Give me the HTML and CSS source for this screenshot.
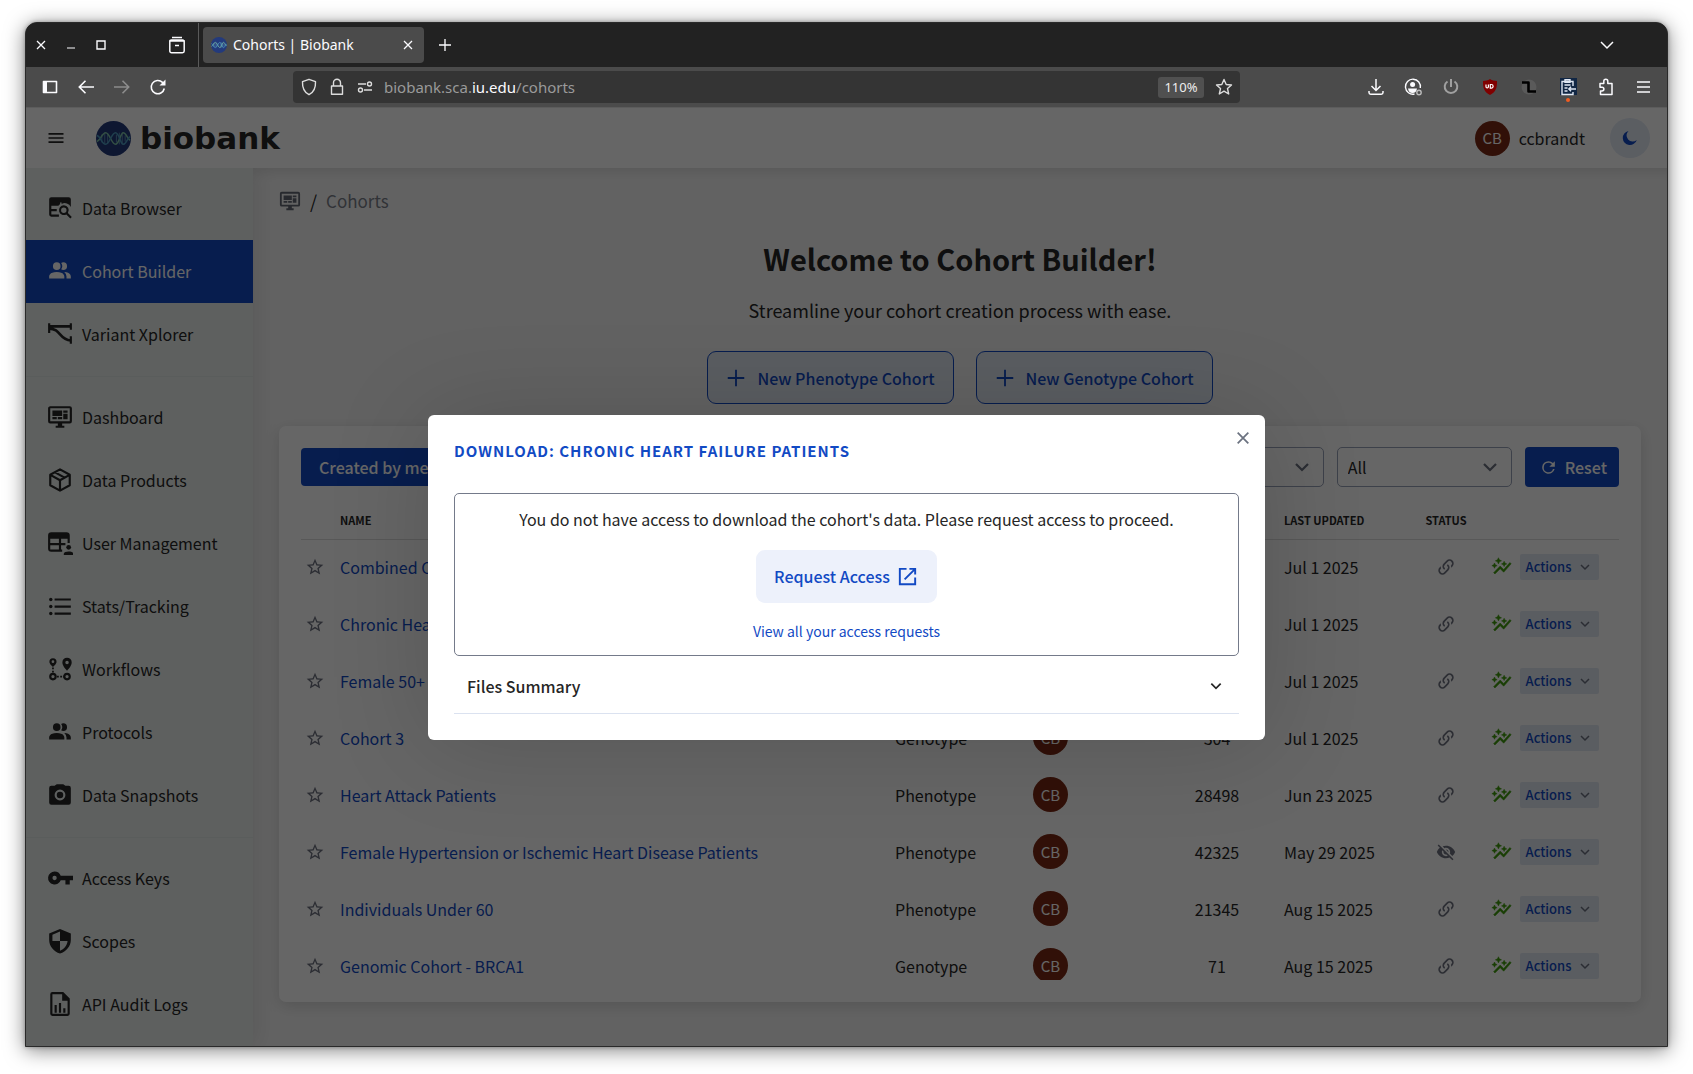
FILE: index.html
```html
<!DOCTYPE html>
<html lang="en">
<head>
<meta charset="utf-8">
<title>Cohorts | Biobank</title>
<link rel="stylesheet" href="styles.css">
</head>
<body>
<svg class="sprite" aria-hidden="true">
  <symbol id="i-logo" viewBox="0 0 36 36"><circle cx="18" cy="18" r="18" fill="#233a7c"/><g fill="none" stroke-width="1"><path d="M6 14v8M9 12v12M12 13v10M21 14v8M24 12v12M27 12v12M30 15v6" stroke="#5f8fb5"/><path d="M1 21c4-1 5-9 9-9s6 12 10 12 5-12 8-12 4 6 7 8" stroke="#7fc4a8" stroke-width="1.6"/><path d="M1 15c4 1 5 9 9 9s6-12 10-12 5 12 8 12 4-6 7-8" stroke="#4f9dc0" stroke-width="1.6"/></g></symbol>
  <symbol id="i-menu" viewBox="0 0 24 24"><path d="M3 6h18v2H3zm0 5h18v2H3zm0 5h18v2H3z"/></symbol>
  <symbol id="i-browse" viewBox="0 0 24 24"><path d="M20 2H4a2 2 0 0 0-2 2v14a2 2 0 0 0 2 2h7v-2H4v-3h5v-2H4v-3h6.500a6 6 0 0 1 2-2H12V7h1.500v1.300A6 6 0 0 1 22 11V4a2 2 0 0 0-2-2z"/><path d="M15.500 9.500a4.500 4.500 0 1 0 2.300 8.400l3.700 3.700 1.400-1.400-3.600-3.700a4.500 4.500 0 0 0-3.800-7zm0 2a2.500 2.500 0 1 1 0 5 2.500 2.500 0 0 1 0-5z"/></symbol>
  <symbol id="i-people" viewBox="0 0 24 24"><path d="M16 17v2H2v-2s0-4 7-4 7 4 7 4m-3.500-9.500A3.500 3.500 0 1 0 9 11a3.500 3.500 0 0 0 3.500-3.500m3.440 5.500A5.320 5.320 0 0 1 18 17v2h4v-2s0-3.630-6.060-4M15 4a3.390 3.390 0 0 0-1.930.590 5 5 0 0 1 0 5.820A3.390 3.390 0 0 0 15 11a3.500 3.500 0 0 0 0-7z"/></symbol>
  <symbol id="i-variant" viewBox="0 0 24 24"><path d="M2 2v9M22 2v6M22 14v7" fill="none" stroke="currentColor" stroke-width="2"/><path d="M2 5h20M2 7c11 0 9 10.500 20 11" fill="none" stroke="currentColor" stroke-width="2.400"/></symbol>
  <symbol id="i-monitor" viewBox="0 0 24 24"><path d="M21 16V4H3v12h18m0-14a2 2 0 0 1 2 2v12a2 2 0 0 1-2 2h-7v2h2v2H8v-2h2v-2H3a2 2 0 0 1-2-2V4c0-1.110.890-2 2-2h18M5 6h9v5H5V6m10 0h4v2h-4V6m4 3v5h-4V9h4M5 12h4v2H5v-2m5 0h4v2h-4v-2z"/></symbol>
  <symbol id="i-box" viewBox="0 0 24 24"><path d="M12 2.200l9 5v9.600l-9 5-9-5V7.200zM3.500 7.500L12 12.200l8.500-4.700M12 12v9.500M7.500 5l8.700 4.800" fill="none" stroke="currentColor" stroke-width="2" stroke-linejoin="round"/></symbol>
  <symbol id="i-users-table" viewBox="0 0 24 24"><path d="M4 2h14a3 3 0 0 1 3 3v7h-2V8h-6v4h4v2h-4v4h1v2H4a3 3 0 0 1-3-3V5a3 3 0 0 1 3-3zM3 8v4h8V8zm0 6v4h8v-4z" fill-rule="evenodd"/><circle cx="20" cy="16" r="2.200"/><path d="M15.500 23v-1c0-3 9-3 9 0v1z"/></symbol>
  <symbol id="i-list" viewBox="0 0 24 24"><path d="M7 5h15v2H7zm0 6.500h15v2H7zM7 18h15v2H7z"/><circle cx="3.500" cy="6" r="1.600"/><circle cx="3.500" cy="12.500" r="1.600"/><circle cx="3.500" cy="19" r="1.600"/></symbol>
  <symbol id="i-flow" viewBox="0 0 24 24"><path d="M5.500 2a3.300 3.300 0 0 0-3.300 3.300C2.200 7.500 5.500 10 5.500 10s3.300-2.500 3.300-4.700A3.300 3.300 0 0 0 5.500 2zm0 2a1.200 1.200 0 1 1 0 2.500 1.200 1.200 0 0 1 0-2.500zM18.500 1.500A4.300 4.300 0 0 0 14.200 6c0 3.300 4.300 7.500 4.300 7.500S22.800 9.300 22.800 6a4.300 4.300 0 0 0-4.300-4.500zm0 2.800a1.600 1.600 0 1 1 0 3.200 1.600 1.600 0 0 1 0-3.200z" fill-rule="evenodd"/><path d="M4.700 10.500h1.600v1.700H4.700zm0 3h1.600v1.700H4.700zM9.200 18.200h1.700v1.600H9.200zm3 0h1.700v1.600h-1.700z"/><g fill="none" stroke="currentColor" stroke-width="2"><circle cx="5.500" cy="19" r="2.500"/><circle cx="18.500" cy="19" r="2.500"/><path d="M15 19h1"/></g></symbol>
  <symbol id="i-camera" viewBox="0 0 24 24"><path fill-rule="evenodd" d="M4 3.500h3L9 2h6l2 1.500h3a2 2 0 0 1 2 2V19a2 2 0 0 1-2 2H4a2 2 0 0 1-2-2V5.500a2 2 0 0 1 2-2M12 7a5 5 0 1 0 0 10 5 5 0 0 0 0-10m0 2a3 3 0 1 1 0 6 3 3 0 0 1 0-6"/></symbol>
  <symbol id="i-key" viewBox="0 0 24 24"><path fill-rule="evenodd" d="M7 14a2 2 0 1 1 0-4 2 2 0 0 1 0 4m5.650-4A6 6 0 0 0 7 6a6 6 0 1 0 5.650 8H17v4h4v-4h3v-4z"/></symbol>
  <symbol id="i-shield" viewBox="0 0 24 24"><path fill-rule="evenodd" d="M12 12h7c-.530 4.110-3.280 7.780-7 8.920V12H5V6.300l7-3.110M12 1 2 5v6c0 5.550 4.200 10.730 10 12.500 5.800-1.770 10-6.950 10-12.500V5z"/></symbol>
  <symbol id="i-chart-file" viewBox="0 0 24 24"><path fill-rule="evenodd" d="M5 1h10l6 6v14a2 2 0 0 1-2 2H5a2 2 0 0 1-2-2V3a2 2 0 0 1 2-2zm0 2v18h14V9h-5V3z"/><path d="M7 13h2v7H7zm4-2h2v9h-2zm4 5h2v4h-2z"/></symbol>
  <symbol id="i-star" viewBox="0 0 24 24"><path d="M12 15.390l-3.760 2.270.990-4.280-3.320-2.880 4.380-.370L12 6.090l1.710 4.040 4.380.370-3.320 2.880.990 4.280M22 9.240l-7.190-.610L12 2 9.190 8.630 2 9.240l5.450 4.730L5.820 21 12 17.270 18.180 21l-1.640-7.030L22 9.240z"/></symbol>
  <symbol id="i-link" viewBox="0 0 24 24"><path d="M10.590 13.410c.410.390.410 1.030 0 1.420-.390.390-1.030.390-1.420 0a5.003 5.003 0 0 1 0-7.070l3.540-3.540a5.003 5.003 0 0 1 7.070 0 5.003 5.003 0 0 1 0 7.070l-1.490 1.490c.010-.820-.120-1.640-.400-2.420l.470-.480a2.982 2.982 0 0 0 0-4.240 2.982 2.982 0 0 0-4.240 0l-3.530 3.530a2.982 2.982 0 0 0 0 4.240m2.820-4.240c.390-.390 1.030-.390 1.420 0a5.003 5.003 0 0 1 0 7.070l-3.540 3.540a5.003 5.003 0 0 1-7.070 0 5.003 5.003 0 0 1 0-7.070l1.490-1.490c-.010.820.120 1.640.400 2.430l-.470.470a2.982 2.982 0 0 0 0 4.240 2.982 2.982 0 0 0 4.240 0l3.530-3.530a2.982 2.982 0 0 0 0-4.240.973.973 0 0 1 0-1.420z"/></symbol>
  <symbol id="i-hidden" viewBox="0 0 24 24"><path d="M12 7c2.760 0 5 2.240 5 5 0 .650-.130 1.260-.360 1.830l2.920 2.920c1.510-1.260 2.700-2.890 3.430-4.750-1.730-4.390-6-7.500-11-7.500-1.400 0-2.740.250-3.980.700l2.160 2.160C10.740 7.130 11.350 7 12 7zM2 4.270l2.280 2.280.460.460C3.080 8.300 1.780 10.020 1 12c1.730 4.390 6 7.500 11 7.500 1.550 0 3.030-.300 4.380-.840l.420.420L19.730 22 21 20.730 3.270 3 2 4.270zM7.530 9.800l1.550 1.550c-.050.210-.080.430-.080.650 0 1.660 1.340 3 3 3 .220 0 .440-.030.650-.080l1.550 1.550c-.670.330-1.410.530-2.200.530-2.760 0-5-2.240-5-5 0-.790.200-1.530.530-2.200zm4.310-.780l3.150 3.150.020-.160c0-1.660-1.340-3-3-3l-.170.010z"/></symbol>
  <symbol id="i-graph" viewBox="0 0 24 24"><path d="M14.060 9.940L12 9l2.060-.940L15 6l.940 2.060L18 9l-2.060.940L15 12zM4 14l.940-2.060L7 11l-2.060-.940L4 8l-.940 2.060L1 11l2.060.940zm4.500-5l1.090-2.410L12 5.500 9.590 4.410 8.500 2 7.410 4.410 5 5.500l2.410 1.090zm-4 11.500l6-6.010 4 4L23 8.930l-1.410-1.410-7.090 7.970-4-4L3 19z" stroke="currentColor" stroke-width=".6"/></symbol>
  <symbol id="i-down" viewBox="0 0 24 24"><path d="M4 8l8 8 8-8" fill="none" stroke="currentColor" stroke-width="3"/></symbol>
  <symbol id="i-refresh" viewBox="0 0 24 24"><path d="M17.650 6.350A7.958 7.958 0 0 0 12 4a8 8 0 1 0 7.730 10h-2.080A6 6 0 1 1 12 6c1.660 0 3.140.690 4.220 1.780L13 11h7V4z"/></symbol>
  <symbol id="i-plus" viewBox="0 0 24 24"><path d="M12 3v18M3 12h18" fill="none" stroke="currentColor" stroke-width="2"/></symbol>
  <symbol id="i-x" viewBox="0 0 24 24"><path d="M4 4l16 16M20 4L4 20" fill="none" stroke="currentColor" stroke-width="2.600"/></symbol>
  <symbol id="i-external" viewBox="0 0 24 24"><path d="M11 4H4v16h16v-7M14 4h6v6M20 4L9 15" fill="none" stroke="currentColor" stroke-width="2"/></symbol>
  <symbol id="i-moon" viewBox="0 0 24 24"><path d="M21 14.500A9.500 9.500 0 1 1 10 2.500a8 8 0 0 0 11 12z"/></symbol>
</svg>

<div class="window">
  <div class="tabs">
    <div class="win-controls">
      <button aria-label="Close window"><svg class="s12"><use href="#i-x"/></svg></button>
      <button aria-label="Minimize"><svg class="s12" viewBox="0 0 12 12"><path d="M2 9h8" fill="none" stroke="currentColor"/></svg></button>
      <button aria-label="Maximize"><svg class="s12" viewBox="0 0 12 12"><path d="M2 2h8v8H2z" fill="none" stroke="currentColor" stroke-width="1.400"/></svg></button>
    </div>
    <button class="view-btn" aria-label="View recent tabs"><svg class="s18" viewBox="0 0 18 18"><path d="M4 1.500h10M1.800 5h14.400v10a1.700 1.700 0 0 1-1.700 1.700h-11A1.700 1.700 0 0 1 1.800 15zM1.800 7.500V5.500A1.500 1.500 0 0 1 3.300 4h11.400a1.500 1.500 0 0 1 1.500 1.500M7 9.500h4" fill="none" stroke="currentColor" stroke-width="1.500"/></svg></button>
    <div class="tab">
      <svg class="s16"><use href="#i-logo"/></svg>
      <span class="tab-title">Cohorts | Biobank</span>
      <button aria-label="Close tab"><svg class="s12"><use href="#i-x"/></svg></button>
    </div>
    <button class="new-tab" aria-label="New tab"><svg class="s16"><use href="#i-plus"/></svg></button>
    <button class="list-tabs" aria-label="List all tabs"><svg class="s16" viewBox="0 0 16 16"><path d="M2 5l6 6 6-6" fill="none" stroke="currentColor" stroke-width="1.500"/></svg></button>
  </div>

  <div class="toolbar">
    <div class="nav-buttons">
      <button aria-label="Sidebar"><svg class="s18" viewBox="0 0 18 18"><path d="M2.500 3.500h13v11h-13z" fill="none" stroke="currentColor" stroke-width="1.600" stroke-linejoin="round"/><path d="M2 3h4v12H2z"/></svg></button>
      <button aria-label="Back"><svg class="s18" viewBox="0 0 18 18"><path d="M17 9H2.500M8.500 2.800L2.300 9l6.200 6.200" fill="none" stroke="currentColor" stroke-width="1.600"/></svg></button>
      <button aria-label="Forward" disabled><svg class="s18" viewBox="0 0 18 18"><path d="M1 9h14.500M9.500 2.800L15.700 9l-6.200 6.200" fill="none" stroke="currentColor" stroke-width="1.600"/></svg></button>
      <button aria-label="Reload"><svg class="s18" viewBox="0 0 18 18"><path d="M15.300 10.500A6.600 6.600 0 1 1 13.500 4.400L15 6" fill="none" stroke="currentColor" stroke-width="1.600"/><path d="M16.500 1.500v6h-6z"/></svg></button>
    </div>
    <div class="urlbar">
      <svg class="s18" viewBox="0 0 18 18"><path d="M9 1.300l6.500 2.400c.3 6.500-1.600 10.500-6.500 13-4.900-2.500-6.800-6.500-6.500-13z" fill="none" stroke="currentColor" stroke-width="1.400" stroke-linejoin="round"/></svg>
      <svg class="s18" viewBox="0 0 18 18"><path d="M3.500 8h11v8.300h-11zM5.500 8V4.800a3.500 3.500 0 0 1 7 0V8" fill="none" stroke="currentColor" stroke-width="1.400" stroke-linejoin="round"/></svg>
      <svg class="s18" viewBox="0 0 18 18"><path d="M2 6h8M8 12h8" stroke="currentColor" stroke-width="1.500"/><g fill="none" stroke="currentColor" stroke-width="1.400"><circle cx="13.500" cy="6" r="2"/><circle cx="4.500" cy="12" r="2"/></g></svg>
      <span class="url">biobank.sca.<b>iu.edu</b>/cohorts</span>
      <button class="zoom-level">110%</button>
      <button aria-label="Bookmark"><svg class="s18" viewBox="0 0 18 18"><path d="M9 1.500l2.200 5 5.300.5-4 3.600 1.200 5.400L9 13.200 4.300 16l1.200-5.400-4-3.600 5.300-.5z" fill="none" stroke="currentColor" stroke-width="1.400" stroke-linejoin="round"/></svg></button>
    </div>
    <div class="tools">
      <button aria-label="Downloads"><svg class="s18" viewBox="0 0 18 18"><path d="M9 1v11M4.500 8L9 12.500 13.500 8M2 13v1.500A1.700 1.700 0 0 0 3.700 16.200h10.600A1.700 1.700 0 0 0 16 14.500V13" fill="none" stroke="currentColor" stroke-width="1.500"/></svg></button>
      <button aria-label="Account"><svg class="s18" viewBox="0 0 18 18"><path d="M10.500 16A7.500 7.500 0 1 1 16.300 10" fill="none" stroke="currentColor" stroke-width="1.400"/><circle cx="8.600" cy="6.500" r="2.500"/><path d="M4 10.500h9c-.5 3-2 4.500-4.500 4.500S4.500 13.500 4 10.500z"/><circle cx="15" cy="14.500" r="2.200" fill="none" stroke="#bbb" stroke-width="1.400"/></svg></button>
      <button class="ext dim" aria-label="Power"><svg class="s18" viewBox="0 0 18 18"><path d="M5.500 3.500a6.300 6.300 0 1 0 7 0M9 1v8" fill="none" stroke="currentColor" stroke-width="2"/></svg></button>
      <button class="ext" aria-label="uBlock"><svg class="s18" viewBox="0 0 18 18"><path d="M9 1c2 1.500 4.500 1.800 7 2 .2 6.500-1 11-7 14C3 14 1.800 9.500 2 3c2.500-.2 5-.5 7-2z" fill="#800000"/><path d="M5 6.500v2.200a1.200 1.200 0 0 0 2.400 0V6.500M9.300 6.500h1a1.800 1.800 0 0 1 0 3.600h-1z" fill="none" stroke="#fff" stroke-width="1.200"/></svg></button>
      <button class="ext" aria-label="Layout extension"><svg class="s18" viewBox="0 0 18 18"><circle cx="9" cy="9" r="7.500" fill="#5a5a5a"/><path d="M2 4.500h6.500v9H16" fill="none" stroke="#000" stroke-width="2.600" stroke-linejoin="round"/></svg></button>
      <button class="ext badge" aria-label="Clipboard extension"><svg class="s18" viewBox="0 0 18 18"><path d="M1 0h17v17H1z" fill="#122744"/><path d="M14 8V3.500H3v13h11V14M6 1.800h5v2.500H6zM5.500 7h6M5.500 10h3M5.500 13h3M17 11h-7M12 8.800L9.800 11l2.200 2.200" fill="none" stroke="#dfe7f2" stroke-width="1.400"/></svg></button>
      <button aria-label="Extensions"><svg class="s18" viewBox="0 0 18 18"><path d="M3 5.500h3.800V3.300a2 2 0 0 1 4 0v2.200H15v11H3.500V13H5a1.900 1.900 0 0 0 0-3.800H3z" fill="none" stroke="currentColor" stroke-width="1.500" stroke-linejoin="round"/></svg></button>
      <button aria-label="Menu"><svg class="s18" viewBox="0 0 18 18"><path d="M3 4h13M3 9h13M3 14h13" stroke="currentColor" stroke-width="1.500"/></svg></button>
    </div>
  </div>

  <div class="viewport">
    <header class="app-header">
      <button class="burger" aria-label="Toggle menu"><svg class="s20"><use href="#i-menu"/></svg></button>
      <a class="brand" href="#"><svg class="brand-mark"><use href="#i-logo"/></svg><span>biobank</span></a>
      <div class="user"><span class="avatar">CB</span><span>ccbrandt</span></div>
      <button class="theme" aria-label="Dark mode"><svg class="s18"><use href="#i-moon"/></svg></button>
    </header>

    <div class="app-body">
      <nav class="sidebar">
        <div class="group">
          <a href="#"><svg><use href="#i-browse"/></svg>Data Browser</a>
          <a href="#" class="active"><svg><use href="#i-people"/></svg>Cohort Builder</a>
          <a href="#"><svg><use href="#i-variant"/></svg>Variant Xplorer</a>
        </div>
        <div class="group">
          <a href="#"><svg><use href="#i-monitor"/></svg>Dashboard</a>
          <a href="#"><svg><use href="#i-box"/></svg>Data Products</a>
          <a href="#"><svg><use href="#i-users-table"/></svg>User Management</a>
          <a href="#"><svg><use href="#i-list"/></svg>Stats/Tracking</a>
          <a href="#"><svg><use href="#i-flow"/></svg>Workflows</a>
          <a href="#"><svg><use href="#i-people"/></svg>Protocols</a>
          <a href="#"><svg><use href="#i-camera"/></svg>Data Snapshots</a>
        </div>
        <div class="group">
          <a href="#"><svg><use href="#i-key"/></svg>Access Keys</a>
          <a href="#"><svg><use href="#i-shield"/></svg>Scopes</a>
          <a href="#"><svg><use href="#i-chart-file"/></svg>API Audit Logs</a>
        </div>
      </nav>

      <main>
        <div class="crumbs"><a href="#" aria-label="Dashboard"><svg><use href="#i-monitor"/></svg></a><span class="slash">/</span><span>Cohorts</span></div>
        <h1>Welcome to Cohort Builder!</h1>
        <p class="lead">Streamline your cohort creation process with ease.</p>
        <div class="cta">
          <button><svg><use href="#i-plus"/></svg>New Phenotype Cohort</button>
          <button><svg><use href="#i-plus"/></svg>New Genotype Cohort</button>
        </div>

        <section class="card">
          <div class="filters">
            <button class="primary">Created by me</button>
            <label class="pick push"><select aria-label="Type"><option>All</option></select><svg><use href="#i-down"/></svg></label>
            <label class="pick"><select aria-label="Status"><option>All</option></select><svg><use href="#i-down"/></svg></label>
            <button class="primary reset"><svg><use href="#i-refresh"/></svg>Reset</button>
          </div>
          <div class="table-wrap">
            <table>
              <colgroup><col class="c-star"><col><col class="c-type"><col class="c-owner"><col class="c-count"><col class="c-date"><col class="c-status"><col class="c-act"></colgroup>
              <thead><tr><th></th><th>Name</th><th>Type</th><th>Owner</th><th class="mid">Count</th><th>Last Updated</th><th class="mid">Status</th><th></th></tr></thead>
              <tbody>
                <tr><td class="star"><svg><use href="#i-star"/></svg></td><td><a href="#">Combined Cohort</a></td><td></td><td></td><td></td><td>Jul 1 2025</td><td class="mid status"><svg><use href="#i-link"/></svg></td><td><div class="acts"><svg><use href="#i-graph"/></svg><button>Actions<svg><use href="#i-down"/></svg></button></div></td></tr>
                <tr><td class="star"><svg><use href="#i-star"/></svg></td><td><a href="#">Chronic Heart Failure</a></td><td></td><td></td><td></td><td>Jul 1 2025</td><td class="mid status"><svg><use href="#i-link"/></svg></td><td><div class="acts"><svg><use href="#i-graph"/></svg><button>Actions<svg><use href="#i-down"/></svg></button></div></td></tr>
                <tr><td class="star"><svg><use href="#i-star"/></svg></td><td><a href="#">Female 50+</a></td><td></td><td></td><td></td><td>Jul 1 2025</td><td class="mid status"><svg><use href="#i-link"/></svg></td><td><div class="acts"><svg><use href="#i-graph"/></svg><button>Actions<svg><use href="#i-down"/></svg></button></div></td></tr>
                <tr><td class="star"><svg><use href="#i-star"/></svg></td><td><a href="#">Cohort 3</a></td><td>Genotype</td><td><span class="avatar">CB</span></td><td class="mid">304</td><td>Jul 1 2025</td><td class="mid status"><svg><use href="#i-link"/></svg></td><td><div class="acts"><svg><use href="#i-graph"/></svg><button>Actions<svg><use href="#i-down"/></svg></button></div></td></tr>
                <tr><td class="star"><svg><use href="#i-star"/></svg></td><td><a href="#">Heart Attack Patients</a></td><td>Phenotype</td><td><span class="avatar">CB</span></td><td class="mid">28498</td><td>Jun 23 2025</td><td class="mid status"><svg><use href="#i-link"/></svg></td><td><div class="acts"><svg><use href="#i-graph"/></svg><button>Actions<svg><use href="#i-down"/></svg></button></div></td></tr>
                <tr><td class="star"><svg><use href="#i-star"/></svg></td><td><a href="#">Female Hypertension or Ischemic Heart Disease Patients</a></td><td>Phenotype</td><td><span class="avatar">CB</span></td><td class="mid">42325</td><td>May 29 2025</td><td class="mid status"><svg><use href="#i-hidden"/></svg></td><td><div class="acts"><svg><use href="#i-graph"/></svg><button>Actions<svg><use href="#i-down"/></svg></button></div></td></tr>
                <tr><td class="star"><svg><use href="#i-star"/></svg></td><td><a href="#">Individuals Under 60</a></td><td>Phenotype</td><td><span class="avatar">CB</span></td><td class="mid">21345</td><td>Aug 15 2025</td><td class="mid status"><svg><use href="#i-link"/></svg></td><td><div class="acts"><svg><use href="#i-graph"/></svg><button>Actions<svg><use href="#i-down"/></svg></button></div></td></tr>
                <tr><td class="star"><svg><use href="#i-star"/></svg></td><td><a href="#">Genomic Cohort - BRCA1</a></td><td>Genotype</td><td><span class="avatar">CB</span></td><td class="mid">71</td><td>Aug 15 2025</td><td class="mid status"><svg><use href="#i-link"/></svg></td><td><div class="acts"><svg><use href="#i-graph"/></svg><button>Actions<svg><use href="#i-down"/></svg></button></div></td></tr>
              </tbody>
            </table>
          </div>
        </section>
      </main>
    </div>

    <div class="overlay">
      <div class="modal" role="dialog" aria-modal="true" aria-labelledby="dialog-title">
        <button class="modal-close" aria-label="Close"><svg><use href="#i-x"/></svg></button>
        <h2 id="dialog-title">Download: Chronic Heart Failure Patients</h2>
        <div class="notice">
          <p>You do not have access to download the cohort's data. Please request access to proceed.</p>
          <button class="request">Request Access<svg><use href="#i-external"/></svg></button>
          <a href="#">View all your access requests</a>
        </div>
        <button class="accordion"><span>Files Summary</span><svg><use href="#i-down"/></svg></button>
      </div>
    </div>
  </div>
</div>
</body>
</html>
```
FILE: styles.css
```css
* { box-sizing: border-box; }
html { background: #fff; }
body {
  margin: 0;
  padding: 22px 25px 28px;
  min-height: 100vh;
  display: flex;
  font: 16px/24px "Noto Sans CJK SC", "Open Sans", sans-serif;
  color: #262626;
}
button, select { font: inherit; color: inherit; }
button { border: 0; background: none; padding: 0; display: flex; align-items: center; justify-content: center; }
a { text-decoration: none; color: #124ac4; }
svg { fill: currentColor; display: block; flex: none; }
.sprite { position: absolute; width: 0; height: 0; }
.s12 { width: 12px; height: 12px; }
.s16 { width: 16px; height: 16px; }
.s18 { width: 18px; height: 18px; }
.s20 { width: 20px; height: 20px; }

/* browser frame */
.window {
  flex: 1;
  min-width: 0;
  display: flex;
  flex-direction: column;
  border: 1px solid #2a2a2a;
  border-radius: 12px 12px 0 0;
  overflow: hidden;
  background: #222;
  box-shadow: 0 3px 20px rgba(0, 0, 0, .5), 0 0 4px rgba(0, 0, 0, .3);
}
.tabs { height: 44px; display: flex; align-items: center; color: #fbfbfe; background: #222; font: 14px/20px "Noto Sans", sans-serif; }
.win-controls { display: flex; }
.win-controls button { width: 30px; height: 30px; }
.view-btn { width: 44px; height: 44px; margin-left: 39px; border-right: 1px solid #5a5a5a; }
.tab { margin-left: 4px; width: 221px; height: 36px; padding: 0 10px 0 8px; display: flex; align-items: center; gap: 6px; border-radius: 4px; background: #4b4b4b; }
.tab-title { flex: 1; white-space: nowrap; }
.new-tab { width: 42px; height: 36px; }
.list-tabs { width: 36px; height: 36px; margin-left: auto; margin-right: 42px; }

.toolbar { height: 41px; display: flex; align-items: center; justify-content: space-between; background: #4b4b4b; border-bottom: 1px solid #5c5c5c; color: #fbfbfe; font: 15px/20px "Noto Sans", sans-serif; }
.nav-buttons { display: flex; padding-left: 6px; }
.nav-buttons button { width: 36px; height: 36px; }
.nav-buttons button:disabled { color: #8c8c8c; }
.urlbar { flex: 1; margin-left: 117px; margin-right: 117px; height: 32px; padding: 0 7px; display: flex; align-items: center; gap: 10px; border-radius: 4px; background: #343434; color: #dcdcdc; }
.url { flex: 1; color: #9a9a9a; }
.url b { font-weight: 400; color: #fbfbfe; }
.zoom-level { width: 46px; height: 21px; margin-right: 1px; border-radius: 3px; background: #505050; color: #eee; font-size: 13px; }
.tools { display: flex; padding-right: 6px; }
.tools button { width: 37px; height: 36px; }
.tools .ext { width: 39px; position: relative; }
.tools .dim { color: #a0a0a0; }
.badge::after { content: ""; position: absolute; left: 18px; bottom: 3px; width: 4px; height: 4px; border-radius: 50%; background: #f25c20; }

/* application */
.viewport { flex: 1; position: relative; display: flex; flex-direction: column; background: #f6f6f6; }
.app-header { position: relative; height: 60px; padding: 0 17px 0 20px; display: flex; align-items: center; background: #fff; }
.burger { width: 20px; height: 20px; }
.brand { display: flex; align-items: center; gap: 9px; margin-left: 30px; color: #262626; font: 700 31px/40px "DejaVu Sans", sans-serif; }
.brand-mark { width: 35px; height: 35px; }
.user { margin-left: auto; display: flex; align-items: center; gap: 9px; }
.avatar { width: 35px; height: 35px; border-radius: 50%; display: grid; place-items: center; background: #7c2a14; color: #fff; font-size: 15px; }
.theme { width: 40px; height: 40px; margin-left: 25px; border-radius: 50%; background: #e3eaf6; color: #124ac4; }

.app-body { flex: 1; display: flex; }
.sidebar { flex: none; width: 227px; background: #ebf0ee; box-shadow: 6px 0 20px rgba(0, 0, 0, .08); }
.group { padding: 9px 0 10px; }
.group + .group { border-top: 1px solid #e2e8e6; }
.group a { height: 63px; padding: 0 0 1px 21px; display: flex; align-items: center; gap: 9px; color: #262626; }
.group svg { width: 26px; height: 26px; overflow: visible; }
.group .active { background: #124ac4; color: #fff; }

main { flex: 1; min-width: 0; padding: 20px 26px 40px; box-shadow: inset 0 12px 12px -8px rgba(0, 0, 0, .1); }
.crumbs { display: flex; align-items: center; gap: 9px; height: 26px; color: #7b7f8a; font-size: 17px; }
.crumbs svg { width: 22px; height: 22px; color: #626873; }
.slash { color: #262626; font-size: 18px; }
h1 { margin: 24px 0 0; font-size: 29px; line-height: 40px; font-weight: 700; text-align: center; }
.lead { margin: 18px 0 0; font-size: 18px; line-height: 28px; text-align: center; }
.cta { margin-top: 27px; display: flex; justify-content: center; gap: 22px; }
.cta button { height: 53px; padding: 0 18px 0 17px; gap: 10px; border: 1px solid #124ac4; border-radius: 9px; background: #e1e8f3; color: #124ac4; font-weight: 500; }
.cta svg { width: 22px; height: 22px; }

.card { margin-top: 22px; padding: 21px 22px 22px; border-radius: 7px; background: #fff; box-shadow: 0 4px 16px rgba(0, 0, 0, .14); }
.filters { display: flex; align-items: center; gap: 13px; }
.primary { height: 38px; padding: 0 18px; border-radius: 4px; background: #124ac4; color: #fff; font-weight: 500; }
.reset { height: 40px; padding: 0 12px 0 14px; gap: 7px; }
.reset svg { width: 19px; height: 19px; }
.push { margin-left: auto; }
.pick { display: grid; align-items: center; }
.pick > * { grid-area: 1 / 1; }
.pick select { appearance: none; width: 175px; height: 40px; padding: 0 10px; border: 1px solid #9aa3b8; border-radius: 5px; background: #fff; }
.pick svg { width: 18px; height: 18px; justify-self: end; margin-right: 13px; color: #6b7280; }
.table-wrap { height: 493px; overflow: hidden; }
table { width: 100%; border-collapse: collapse; table-layout: fixed; }
.c-star { width: 39px; }
.c-type { width: 138px; }
.c-owner { width: 117px; }
.c-count { width: 134px; }
.c-date { width: 121px; }
.c-status { width: 82px; }
.c-act { width: 132px; }
th { height: 52px; padding: 14px 0 0; border-bottom: 1px solid #dcdcdc; text-align: left; text-transform: uppercase; white-space: nowrap; font-size: 11px; line-height: 16px; }
td { height: 57px; padding: 0 0 2px; white-space: nowrap; }
.mid { text-align: center; }
.star svg { width: 20px; height: 20px; margin-left: 4px; color: #6e7280; }
.status svg { width: 20px; height: 20px; margin: 0 auto; color: #6e7280; }
.acts { display: flex; align-items: center; gap: 8px; padding-left: 4px; }
.acts > svg { width: 21px; height: 21px; color: #3f9c0c; }
.acts button { width: 79px; height: 26px; padding-right: 2px; gap: 8px; border-radius: 2px; background: #e1e8f3; color: #124ac4; font-size: 13px; font-weight: 500; }
.acts button svg { width: 12px; height: 12px; color: #6b7280; }

/* dialog */
.overlay { position: absolute; inset: 0; display: grid; place-items: center; background: rgba(0, 0, 0, .6); }
.modal { position: relative; width: 837px; max-width: 90%; padding: 24px 26px 26px; border-radius: 6px; background: #fff; box-shadow: 0 4px 100px rgba(0, 0, 0, .16); }
.modal-close { position: absolute; top: 14px; right: 13px; width: 18px; height: 18px; color: #6b7280; }
.modal-close svg { width: 16px; height: 16px; }
h2 { margin: 0; font-size: 15px; line-height: 24px; font-weight: 700; letter-spacing: 1px; text-transform: uppercase; color: #124ac4; }
.notice { margin-top: 30px; height: 163px; padding: 13px; display: flex; flex-direction: column; align-items: center; border: 1px solid #747a8a; border-radius: 5px; }
.notice p { margin: 0; }
.notice a { margin-top: 16px; font-size: 14px; }
.request { flex: none; margin-top: 19px; height: 53px; padding: 0 18px; gap: 6px; border-radius: 9px; background: #edf1fb; color: #124ac4; font-weight: 500; }
.request svg { width: 23px; height: 23px; }
.accordion { width: 100%; height: 58px; padding: 4px 16px 0 13px; justify-content: space-between; border-bottom: 1px solid #dbe2f0; font-weight: 500; }
.accordion svg { width: 14px; height: 14px; }
```
